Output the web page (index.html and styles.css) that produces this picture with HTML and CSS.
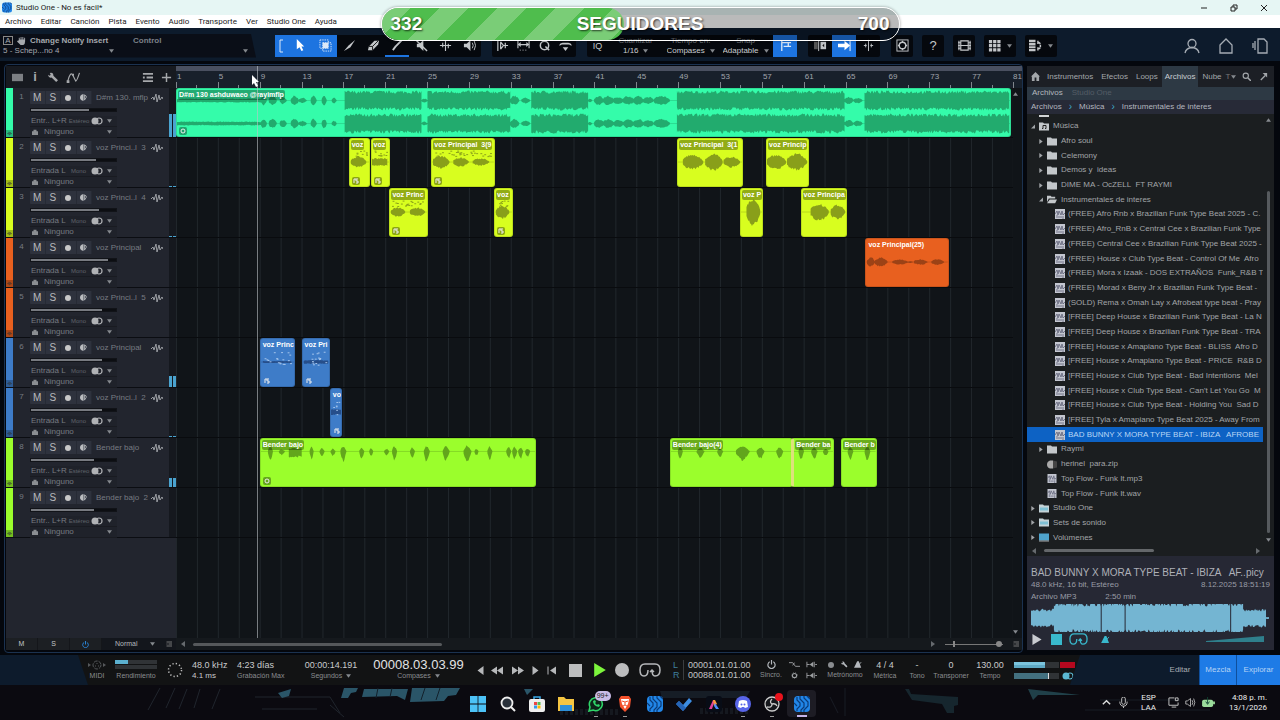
FILE: index.html
```html
<!DOCTYPE html>
<html lang="es">
<head>
    <meta charset="UTF-8">
    <meta name="viewport" content="width=device-width, initial-scale=1.0">
    <title>Studio One - No es facil*</title>
    <link rel="stylesheet" href="styles.css">
</head>
<body>
    <!-- icon sprite -->
    <svg class="sprite" aria-hidden="true">
        <symbol id="logo" viewBox="0 0 16 16"><rect width="16" height="16" rx="4" fill="#2186e8"/><path d="M3 1v3l3 3v3l-3 3v2M6 0v3l4 4v4l-3 3v2M10 0v2l4 4v4l-4 4v2M0 7l3 3M13 0l3 3" fill="none" stroke="#0b3b78" stroke-width="1.2"/></symbol>
        <symbol id="hand" viewBox="0 0 10 10"><path d="M2 5V2h1v2h1V1h1v3h1V1h1v3h1V2h1v4q0 3-2 4H4L0 6l1-1z" fill="currentColor"/></symbol>
        <symbol id="arrow" viewBox="0 0 10 14"><path d="M1 0v11l3-2 2 4 2-1-2-4h3z" fill="#fff"/></symbol>
        <symbol id="select" viewBox="0 0 14 14"><path d="M1 1h9v9H1zM4 4h9v9H4z" fill="none" stroke="currentColor" stroke-dasharray="1.5 1"/><path d="M4 4h6v6H4z" fill="currentColor"/></symbol>
        <symbol id="knife" viewBox="0 0 14 14"><path d="M13 1L6 7 1 13l7-4z" fill="currentColor"/></symbol>
        <symbol id="eraser" viewBox="0 0 14 14"><path d="M8 2h5l-1 4-6 6H1l1-4z" fill="currentColor"/><path d="M2 8h4l6-6M6 8v4" stroke="#111" fill="none"/></symbol>
        <symbol id="brush" viewBox="0 0 14 14"><path d="M13 1L4 10M5 9l-3 4" stroke="currentColor" stroke-width="2"/></symbol>
        <symbol id="mute" viewBox="0 0 14 14"><path d="M2 5h3l4-4v12L5 9H2z" fill="currentColor"/><path d="M1 1l12 12" stroke="currentColor" stroke-width="1.5"/></symbol>
        <symbol id="bend" viewBox="0 0 14 14"><path d="M7 1v12M1 7h12M4 4v5M10 5v5" stroke="currentColor" stroke-width="1.2"/></symbol>
        <symbol id="speaker" viewBox="0 0 14 14"><path d="M1 5h3l4-4v12L4 9H1z" fill="currentColor"/><path d="M10 4q2 3 0 6M12 2q3 5 0 10" fill="none" stroke="currentColor"/></symbol>
        <symbol id="stripin" viewBox="0 0 14 14"><path d="M2 1v12M5 3l3 4-3 4M5 3v8M8 7h5M10 4v6" fill="none" stroke="currentColor" stroke-width="1.3"/></symbol>
        <symbol id="range" viewBox="0 0 14 14"><path d="M1 2v8M13 2v8M2 6h10M4 4L2 6l2 2M10 4l2 2-2 2" fill="none" stroke="currentColor" stroke-width="1.2"/><path d="M3 12h9" stroke="currentColor" stroke-dasharray="1 2"/></symbol>
        <symbol id="quant" viewBox="0 0 14 14"><circle cx="7" cy="7" r="4.5" fill="none" stroke="currentColor" stroke-width="1.6"/><path d="M8 8l4 4" stroke="currentColor" stroke-width="1.6"/></symbol>
        <symbol id="macro" viewBox="0 0 14 14"><path d="M0 7q1-3 4-3h6q3 0 4 3-2 0-3-1H3Q2 7 0 7zM4 9h6l-3 4z" fill="currentColor"/></symbol>
        <symbol id="snap" viewBox="0 0 14 14"><path d="M3 1v12M3 4h10M5 8h8M10 4v4" fill="none" stroke="currentColor" stroke-width="1.4"/></symbol>
        <symbol id="blocks" viewBox="0 0 14 14"><path d="M0 3h4v8H0z" fill="#555"/><path d="M7 3h6v8H7z" fill="currentColor"/><path d="M5 2v11" stroke="currentColor"/><path d="M11 5L9 7l2 2z" fill="#111"/></symbol>
        <symbol id="follow" viewBox="0 0 14 14"><path d="M0 5h7V2l6 5-6 5V9H0z" fill="#fff"/><path d="M13 1v12" stroke="#fff"/></symbol>
        <symbol id="center" viewBox="0 0 14 14"><path d="M7 1v12M4 5v4M10 5v4M2 7h3M9 7h3" stroke="currentColor"/></symbol>
        <symbol id="ring" viewBox="0 0 14 14"><rect x="1" y="1" width="12" height="12" fill="none" stroke="currentColor"/><circle cx="7" cy="7" r="3.5" fill="none" stroke="currentColor" stroke-width="1.5"/><path d="M7 2v2M7 10v2M2 7h2M10 7h2" stroke="currentColor" stroke-width="1.5"/></symbol>
        <symbol id="film" viewBox="0 0 14 14"><path d="M3 2h8v10H3zM3 7h8M1 2v10M13 2v10" fill="none" stroke="currentColor" stroke-width="1.2"/><path d="M0 4h3M0 7h3M0 10h3M11 4h3M11 7h3M11 10h3" stroke="currentColor"/></symbol>
        <symbol id="grid" viewBox="0 0 14 14"><path d="M1 1h3.500v3.500H1zM5.500 1H9v3.500H5.500zM10 1h3.500v3.500H10zM1 5.500h3.500V9H1zM5.500 5.500H9V9H5.500zM10 5.500h3.500V9H10zM1 10h3.500v3.500H1zM5.500 10H9v3.500H5.500zM10 10h3.500v3.500H10z" fill="currentColor"/></symbol>
        <symbol id="rows" viewBox="0 0 16 14"><path d="M0 0h8v3H0zM0 4h8v3H0zM0 8h8v2H0zM0 11h8v3H0z" fill="currentColor"/><path d="M11 1v4M12 3l2 2M14 6v3M11 9v4M12 11l2-1" stroke="currentColor" stroke-width="1.8"/></symbol>
        <symbol id="user" viewBox="0 0 16 16"><circle cx="8" cy="5.500" r="4" fill="none" stroke="currentColor" stroke-width="1.300"/><path d="M1 15q1-5 7-5.500 6 .5 7 5.500" fill="none" stroke="currentColor" stroke-width="1.300"/></symbol>
        <symbol id="house" viewBox="0 0 16 16"><path d="M2 7l6-6 6 6v8H2z" fill="none" stroke="currentColor" stroke-width="1.300"/></symbol>
        <symbol id="pages" viewBox="0 0 16 16"><path d="M6 1h6l3 3v11H6zM3 3v9M1 5v5" fill="none" stroke="currentColor" stroke-width="1.300"/></symbol>
        <symbol id="panel" viewBox="0 0 12 10"><path d="M0 1h12v8H0z" fill="#7c7f83"/></symbol>
        <symbol id="wrench" viewBox="0 0 12 12"><path d="M1 3l2 1 1-1-1-2q4-1 4 3l5 5-2 2-5-5Q2 7 1 3z" fill="currentColor"/></symbol>
        <symbol id="curve" viewBox="0 0 16 12"><path d="M1 11Q4-2 7 4t3 6q1 0 4-9" fill="none" stroke="currentColor" stroke-width="1.300"/><path d="M0 9h3v3H0zM6 2h2v2H6z" fill="currentColor"/></symbol>
        <symbol id="lines" viewBox="0 0 12 12"><path d="M1 2h11M1 6h2M5 6h7M1 10h11" stroke="currentColor" stroke-width="2"/></symbol>
        <symbol id="plus" viewBox="0 0 12 12"><path d="M6 1v10M1 6h10" stroke="currentColor" stroke-width="1.600"/></symbol>
        <symbol id="wave" viewBox="0 0 12 8"><path d="M0 5l2-2 1 3 2-6 1 8 2-7 1 5 2-3 1 2" fill="none" stroke="currentColor"/></symbol>
        <symbol id="half" viewBox="0 0 8 8"><path d="M4 0v8Q0 7 0 4t4-4z" fill="currentColor"/><path d="M5 1q3 1 2 3t-2 3z" fill="none" stroke="currentColor"/></symbol>
        <symbol id="stereo" viewBox="0 0 12 8"><circle cx="4" cy="4" r="3.500" fill="currentColor"/><circle cx="8" cy="4" r="3" fill="none" stroke="currentColor" stroke-width="1.200"/></symbol>
        <symbol id="cube" viewBox="0 0 8 8"><path d="M0 3h8v5H0zM2 1h4v2H2z" fill="currentColor"/></symbol>
        <symbol id="bracket" viewBox="0 0 6 14"><path d="M5 1H2v12h3" fill="none" stroke="currentColor"/></symbol>
        <symbol id="event" viewBox="0 0 8 8"><path d="M2 6V2h4M4 2v2h2M4 6h2V4" fill="none" stroke="#eee"/></symbol>
        <symbol id="timebase" viewBox="0 0 8 8"><circle cx="4" cy="4" r="2" fill="none" stroke="#eee"/></symbol>
        <symbol id="down" viewBox="0 0 6 4"><path d="M0 0h6L3 4z" fill="currentColor"/></symbol>
        <symbol id="right" viewBox="0 0 4 6"><path d="M0 0v6l4-3z" fill="currentColor"/></symbol>
        <symbol id="left" viewBox="0 0 4 6"><path d="M4 0v6L0 3z" fill="currentColor"/></symbol>
        <symbol id="up" viewBox="0 0 6 4"><path d="M0 4h6L3 0z" fill="currentColor"/></symbol>
        <symbol id="open" viewBox="0 0 5 5"><path d="M5 0v5H0z" fill="currentColor"/></symbol>
        <symbol id="power" viewBox="0 0 10 10"><path d="M3 2a4 4 0 1 0 4 0M5 0v5" fill="none" stroke="currentColor" stroke-width="1.300"/></symbol>
        <symbol id="homefill" viewBox="0 0 10 10"><path d="M5 0l5 5H9v5H6V6H4v4H1V5H0z" fill="currentColor"/></symbol>
        <symbol id="search" viewBox="0 0 12 12"><circle cx="5" cy="5" r="3.500" fill="none" stroke="currentColor" stroke-width="1.500"/><path d="M8 8l4 4" stroke="currentColor" stroke-width="2"/></symbol>
        <symbol id="popout" viewBox="0 0 10 10"><path d="M2 9l5-5" stroke="currentColor" stroke-width="1.500"/><path d="M4 1h5v5z" fill="currentColor"/></symbol>
        <symbol id="folder" viewBox="0 0 10 8"><path d="M0 0h4l1 1h5v7H0z" fill="currentColor"/></symbol>
        <symbol id="folderopen" viewBox="0 0 11 8"><path d="M0 0h4l1 1h4v2H2L0 7zM3 4h8L9 8H0z" fill="currentColor"/></symbol>
        <symbol id="music" viewBox="0 0 10 8"><path d="M0 0h4l1 1h5v7H0z" fill="currentColor"/><path d="M4 6V3h3v3M3 6h1M6 6h1" stroke="#222" fill="none"/></symbol>
        <symbol id="set" viewBox="0 0 10 8"><path d="M0 0h4l1 1h5v7H0z" fill="#c5d3d8"/><path d="M1 3h8v3H1z" fill="#7fc0d4"/></symbol>
        <symbol id="disk" viewBox="0 0 10 8"><path d="M0 0h10v7H0z" fill="#4fa3cc"/><path d="M0 7h10v1H0z" fill="#aaa"/></symbol>
        <symbol id="zip" viewBox="0 0 10 8"><path d="M3 0h3v8H3Q0 7 0 4t3-4z" fill="#aaa"/><path d="M6 0l4 1v6L6 8z" fill="#444"/></symbol>
        <symbol id="audio" viewBox="0 0 10 10"><path d="M0 0h10v10H0z" fill="#c3c6d0"/><path d="M0 5l2-3 1 4 1-4 2 4 1-4 1 4 2-2M2 6v3M4 7v2M6 7v2M8 7v3" fill="none" stroke="#5d6076" stroke-width=".8"/></symbol>
        <symbol id="loop" viewBox="0 0 22 14"><path d="M9 7q0 6-4 6T1 7q0-6 5-6h10q5 0 5 6t-5 6q-3 0-3-6M11 9l2-2 2 2" fill="none" stroke="currentColor" stroke-width="1.500"/></symbol>
        <symbol id="metro" viewBox="0 0 10 8"><path d="M4 0h2l3 8H0z" fill="currentColor"/><path d="M9 1L4 7" stroke="currentColor"/></symbol>
        <symbol id="play" viewBox="0 0 10 12"><path d="M0 0v12l10-6z" fill="currentColor"/></symbol>
        <symbol id="rew" viewBox="0 0 13 8"><path d="M6 0v8L0 4zM12 0v8L6 4z" fill="currentColor"/></symbol>
        <symbol id="fwd" viewBox="0 0 13 8"><path d="M1 0v8l6-4zM7 0v8l6-4z" fill="currentColor"/></symbol>
        <symbol id="zero" viewBox="0 0 9 8"><path d="M9 0v8L3 4z" fill="currentColor"/><path d="M1 0v8" stroke="currentColor"/></symbol>
        <symbol id="midi" viewBox="0 0 18 10"><circle cx="9" cy="5" r="4" fill="none" stroke="currentColor" stroke-dasharray="4 1"/><path d="M0 3v4l3-2zM15 3v4l3-2z" fill="currentColor"/><path d="M7 6h1M10 6h1M9 3v1" stroke="currentColor"/></symbol>
        <symbol id="gear" viewBox="0 0 10 10"><circle cx="5" cy="5" r="3" fill="none" stroke="currentColor" stroke-width="1.500"/><circle cx="5" cy="5" r="4.300" fill="none" stroke="currentColor" stroke-dasharray="1 2"/></symbol>
        <symbol id="ramp" viewBox="0 0 12 6"><path d="M0 1h4l3 4h5M6 1l-2 3" fill="none" stroke="currentColor"/></symbol>
        <symbol id="punch" viewBox="0 0 12 6"><path d="M1 0v6M1 3h3M10 3h2" stroke="currentColor"/><path d="M4 3l4-3v6z" fill="currentColor"/><path d="M9 0v6" stroke="currentColor"/></symbol>
    </svg>

    <header class="titlebar">
        <svg class="app-icon"><use href="#logo"/></svg>
        <span>Studio One - No es facil*</span>
        <div class="window-buttons">
            <button aria-label="Minimizar"><svg viewBox="0 0 8 8"><path d="M1 4h6" stroke="#222"/></svg></button>
            <button aria-label="Restaurar"><svg viewBox="0 0 8 8"><path d="M1 3h4v4H1zM3 3V1h4v4H5" fill="none" stroke="#222"/></svg></button>
            <button aria-label="Cerrar"><svg viewBox="0 0 8 8"><path d="M1 1l6 6M7 1L1 7" stroke="#222"/></svg></button>
        </div>
    </header>
    <nav class="menubar">
        <a href="#">Archivo</a><a href="#">Editar</a><a href="#">Canción</a><a href="#">Pista</a><a href="#">Evento</a><a href="#">Audio</a><a href="#">Transporte</a><a href="#">Ver</a><a href="#">Studio One</a><a href="#">Ayuda</a>
    </nav>

    <section class="toolbar">
        <div class="param">
            <div class="param-insert">
                <div class="param-line"><span class="auto">A</span><svg class="s8"><use href="#hand"/></svg><b>Change Notify Insert</b></div>
                <div class="param-line"><span class="param-value">5 - Schep...no 4</span><svg class="caret"><use href="#down"/></svg></div>
            </div>
            <div class="param-control">
                <b>Control</b>
                <svg class="caret"><use href="#down"/></svg>
            </div>
        </div>
        <div class="group tools">
            <div class="tool-on">
                <button class="bracket" aria-label="Grupo"><svg><use href="#bracket"/></svg></button>
                <button class="wide" aria-label="Flecha"><svg><use href="#arrow"/></svg></button>
                <button aria-label="Rango"><svg><use href="#select"/></svg></button>
            </div>
            <button aria-label="Dividir"><svg><use href="#knife"/></svg></button>
            <button aria-label="Borrar"><svg><use href="#eraser"/></svg></button>
            <button class="marked" aria-label="Pintar"><svg><use href="#brush"/></svg></button>
            <button aria-label="Silenciar"><svg><use href="#mute"/></svg></button>
            <button aria-label="Doblar"><svg><use href="#bend"/></svg></button>
            <button aria-label="Escuchar"><svg><use href="#speaker"/></svg></button>
        </div>
        <div class="group narrow">
            <button aria-label="Transitorios"><svg><use href="#stripin"/></svg></button>
            <button aria-label="Longitud"><svg><use href="#range"/></svg></button>
            <button aria-label="Cuantizar evento"><svg><use href="#quant"/></svg></button>
            <button aria-label="Macros"><svg><use href="#macro"/></svg></button>
        </div>
        <div class="group">
            <button class="iq">IQ</button>
            <label class="pick">Cuantizar<span><select><option>1/16</option></select><svg class="caret"><use href="#down"/></svg></span></label>
            <label class="pick">Tiempo en:<span><select><option>Compases</option></select><svg class="caret"><use href="#down"/></svg></span></label>
            <label class="pick">Snap<span><select><option>Adaptable</option></select><svg class="caret"><use href="#down"/></svg></span></label>
            <button class="on" aria-label="Ajustar"><svg><use href="#snap"/></svg></button>
        </div>
        <div class="group">
            <button aria-label="Autodesplazar"><svg><use href="#blocks"/></svg></button>
            <button class="on" aria-label="Seguir"><svg><use href="#follow"/></svg></button>
            <button aria-label="Cursor"><svg><use href="#center"/></svg></button>
        </div>
        <div class="singles">
            <button aria-label="Anillo"><svg><use href="#ring"/></svg></button>
            <button class="help">?</button>
            <button aria-label="Video"><svg><use href="#film"/></svg></button>
            <button class="drop" aria-label="Pads"><svg><use href="#grid"/></svg><svg class="caret"><use href="#down"/></svg></button>
            <button class="drop" aria-label="Vista"><svg><use href="#rows"/></svg><svg class="caret"><use href="#down"/></svg></button>
        </div>
        <div class="account">
            <button aria-label="Cuenta"><svg><use href="#user"/></svg></button>
            <button aria-label="Inicio"><svg><use href="#house"/></svg></button>
            <button aria-label="Documentos"><svg><use href="#pages"/></svg></button>
        </div>
    </section>

    <main class="workspace">
        <section class="arranger">
            <div class="track-side">
                <div class="list-head">
                    <button aria-label="Inspector"><svg><use href="#panel"/></svg></button>
                    <button class="info">i</button>
                    <button aria-label="Opciones"><svg><use href="#wrench"/></svg></button>
                    <button aria-label="Automatización"><svg class="w16"><use href="#curve"/></svg></button>
                    <button class="push" aria-label="Lista de pistas"><svg><use href="#lines"/></svg></button>
                    <button aria-label="Agregar pista"><svg><use href="#plus"/></svg></button>
                </div>
                <div class="tracks" id="tracks"></div>
                <div class="list-foot">
                    <button>M</button><button>S</button><button aria-label="Encendido"><svg><use href="#power"/></svg></button>
                    <select aria-label="Altura de pista"><option>Normal</option></select>
                    <svg class="caret"><use href="#down"/></svg>
                    <svg class="s6"><use href="#lines"/></svg>
                </div>
            </div>
            <div class="timeline">
                <div class="ruler"><div class="ruler-scale" id="ruler"></div><span class="ruler-end">81</span></div>
                <div class="lanes-wrap">
                    <div class="lanes" id="lanes"></div>
                    <div class="vscroll"><svg class="caret"><use href="#up"/></svg><svg class="caret"><use href="#down"/></svg></div>
                </div>
                <div class="hscroll">
                    <svg class="arrow-h"><use href="#left"/></svg>
                    <div class="hscroll-rail"><div class="hscroll-thumb"></div></div>
                    <svg class="arrow-h"><use href="#right"/></svg>
                    <input class="zoom" type="range" value="98" aria-label="Zoom horizontal">
                    <svg class="s6"><use href="#lines"/></svg>
                </div>
                <div class="playhead"></div>
                <svg class="pointer" viewBox="0 0 8 12"><path d="M0 0v10l2-2 2 4 2-1-2-4h3z" fill="#fff"/></svg>
            </div>
        </section>

        <aside class="browser">
            <nav class="tabs">
                <a href="#" class="home" aria-label="Inicio"><svg class="s8"><use href="#homefill"/></svg></a>
                <a href="#">Instrumentos</a><a href="#">Efectos</a><a href="#">Loops</a><a href="#" class="active">Archivos</a><a href="#">Nube</a>
                <span class="tab-more">T<svg class="caret"><use href="#down"/></svg></span>
                <button aria-label="Buscar"><svg class="s8"><use href="#search"/></svg></button>
                <button aria-label="Desacoplar"><svg class="s8"><use href="#popout"/></svg></button>
            </nav>
            <div class="subtabs"><a href="#">Archivos</a><a href="#" class="off">Studio One</a></div>
            <div class="crumbs"><a href="#">Archivos</a><i>›</i><a href="#">Música</a><i>›</i><a href="#">Instrumentales de interes</a></div>
            <div class="tree-wrap">
                <ul class="tree" id="tree"></ul>
                <div class="tree-scroll"><svg class="caret"><use href="#up"/></svg><div class="tree-thumb"></div><svg class="caret"><use href="#down"/></svg></div>
            </div>
            <div class="tree-hscroll"><svg class="arrow-h"><use href="#left"/></svg><div class="tree-rail"><div class="tree-hthumb"></div></div><svg class="arrow-h"><use href="#right"/></svg></div>
            <div class="preview">
                <h2>BAD BUNNY X MORA TYPE BEAT - IBIZA   AF..picy</h2>
                <div class="preview-row"><span>48.0 kHz, 16 bit, Estéreo</span><span>8.12.2025 18:51:19</span></div>
                <div class="preview-row second"><span>Archivo MP3</span><span>2:50 min</span></div>
                <svg class="preview-wave" id="preview" viewBox="0 0 240 28" preserveAspectRatio="none"></svg>
                <div class="preview-controls">
                    <button aria-label="Reproducir"><svg class="p-play"><use href="#play"/></svg></button>
                    <button class="p-stop" aria-label="Detener"></button>
                    <button aria-label="Bucle"><svg class="p-loop"><use href="#loop"/></svg></button>
                    <button aria-label="Metrónomo"><svg class="p-metro"><use href="#metro"/></svg></button>
                    <svg class="p-vol" viewBox="0 0 58 6" preserveAspectRatio="none"><path d="M0 5L58 0v6H0z" fill="#2f7f8c"/></svg>
                </div>
            </div>
        </aside>
    </main>

    <footer class="transport">
        <div class="transport-main">
            <div class="cell"><svg class="midi"><use href="#midi"/></svg><small>MIDI</small></div>
            <div class="cell"><div class="cpu"><div></div><div></div></div><small>Rendimiento</small></div>
            <div class="cell"><svg class="dots" viewBox="0 0 16 16"><circle cx="8" cy="8" r="6.500" fill="none" stroke="#bbb" stroke-width="1.500" stroke-dasharray="1.300 2.100"/></svg></div>
            <div class="cell start"><b>48.0 kHz</b><small class="lit">4.1 ms</small></div>
            <div class="cell start pad"><b>4:23 días</b><small>Grabación Max</small></div>
            <div class="cell"><b>00:00:14.191</b><small>Segundos <svg class="caret"><use href="#down"/></svg></small></div>
            <div class="cell"><b class="position">00008.03.03.99</b><small>Compases <svg class="caret"><use href="#down"/></svg></small></div>
            <div class="controls">
                <button aria-label="Atrás"><svg class="t-s"><use href="#left"/></svg></button>
                <button aria-label="Rebobinar"><svg class="t-w"><use href="#rew"/></svg></button>
                <button aria-label="Avanzar"><svg class="t-w"><use href="#fwd"/></svg></button>
                <button aria-label="Adelante"><svg class="t-s"><use href="#right"/></svg></button>
                <button aria-label="Ir a cero"><svg class="t-z"><use href="#zero"/></svg></button>
                <button aria-label="Detener"><span class="stop"></span></button>
                <button aria-label="Reproducir"><svg class="t-play"><use href="#play"/></svg></button>
                <button aria-label="Grabar"><span class="rec"></span></button>
                <button aria-label="Bucle"><svg class="t-loop"><use href="#loop"/></svg></button>
            </div>
            <div class="locators"><div class="lr"><span>L</span><span>R</span></div><div class="lr-times"><span>00001.01.01.00</span><span>00088.01.01.00</span></div></div>
            <div class="cell"><svg class="s8"><use href="#power"/></svg><small>Sincro.</small></div>
            <div class="quad"><svg><use href="#ramp"/></svg><svg><use href="#punch"/></svg><svg><use href="#gear"/></svg><svg><use href="#punch"/></svg></div>
            <div class="cell"><div class="trio"><span class="dot"></span><svg><use href="#wrench"/></svg><svg><use href="#metro"/></svg></div><small>Metrónomo</small></div>
            <div class="cell"><b>4 / 4</b><small>Métrica</small></div>
            <div class="cell"><b>-</b><small>Tono</small></div>
            <div class="cell"><b>0</b><small>Transponer</small></div>
            <div class="cell"><b>130.00</b><small>Tempo</small></div>
            <div class="outs">
                <div class="out-row"><div class="out"><div class="out-a"></div></div><div class="clip-led"></div></div>
                <div class="out-row"><div class="out"><div class="out-b"></div></div><svg><use href="#stereo"/></svg></div>
            </div>
        </div>
        <div class="views"><button>Editar</button><button class="on">Mezcla</button><button class="on">Explorar</button></div>
    </footer>

    <div class="taskbar">
        <svg class="wallpaper" viewBox="0 0 1280 35" preserveAspectRatio="none">
            <path d="M160 3l-12 22M175 3l-9 20M187 4l-8 20M200 4l-6 19M220 4l-8 20M255 12h75l10 16M262 24h55M330 20l14 12" stroke="#20252d" fill="none"/>
            <path d="M278 8l13-4-2 7-7 2zM344 3h14l-2 4-5 1-3 5h-7zM364 4h44l-3 11-8-4-35 1zM412 3h48l-4 7-8 1-4 5-34 1zM524 4h9l-6 6z" fill="#2a5568"/>
            <path d="M378 3l-2 10M392 3l-2 9M425 3l-4 12M440 3l-4 12" stroke="#12202b"/>
            <path d="M660 6h90l-4 7h-84z" fill="#161d26"/>
            <path d="M560 27h60M700 26h50" stroke="#15181f" stroke-width="6" stroke-dasharray="3 2"/>
            <path d="M905 4h4l2 5 47 3v8l-4 1v7h-7l-5-9-30-4z" fill="#16262e"/>
            <path d="M1028 4l52 6h-42l-5 5z" fill="#204049"/>
            <path d="M1085 25h125M1100 15h80M845 3v28M830 12l8 16" stroke="#191c25"/>
        </svg>
        <div class="task-apps">
            <button aria-label="Inicio"><svg viewBox="0 0 16 16"><path d="M0 0h7.600v7.600H0zM8.400 0H16v7.600H8.400zM0 8.400h7.600V16H0zM8.400 8.400H16V16H8.400z" fill="#4cc2f7"/></svg></button>
            <button aria-label="Buscar"><svg viewBox="0 0 16 16"><circle cx="7" cy="7" r="5.500" fill="#29303a" stroke="#eee" stroke-width="1.800"/><path d="M11 11l4 4" stroke="#eee" stroke-width="2"/></svg></button>
            <button aria-label="Store"><svg viewBox="0 0 16 16"><path d="M5 4V1h6v3" fill="none" stroke="#3aa9e8" stroke-width="1.500"/><rect y="3" width="16" height="13" rx="2" fill="#eee"/><path d="M5 6h3v3H5z" fill="#e44"/><path d="M8.500 6h3v3h-3z" fill="#5b5"/><path d="M5 9.500h3v3H5z" fill="#39e"/><path d="M8.500 9.500h3v3h-3z" fill="#fb0"/></svg></button>
            <button aria-label="Explorador"><svg viewBox="0 0 16 16"><path d="M0 1h6l2 2h8v12H0z" fill="#f5c542"/><path d="M2 9h12v6H2z" fill="#2d8fd8"/></svg></button>
            <button class="run" aria-label="WhatsApp"><svg viewBox="0 0 16 16"><path d="M1 15l1-4a6.500 6.500 0 1 1 3 3z" fill="#0d2418" stroke="#2fd468" stroke-width="1.600"/><path d="M5 5q0 5 6 6l1-2-2-1-1 1-2-2 1-1-1-2z" fill="#2fd468"/></svg><span class="badge">99+</span></button>
            <button class="run" aria-label="Brave"><svg viewBox="0 0 16 16"><path d="M4 0h8l2 3-1 8-5 5-5-5-1-8z" fill="#f4512c"/><path d="M4 3h8l-1 5-3 5-3-5z" fill="#fff"/><path d="M5 5l3 1 3-1M8 6v3M6 10l2-1 2 1" fill="none" stroke="#f4512c"/></svg></button>
            <button aria-label="Studio One"><svg><use href="#logo"/></svg></button>
            <button aria-label="Tareas"><svg viewBox="0 0 16 16"><path d="M0 8l3-3 4 4 6-7 3 3-9 10z" fill="#3d8de2"/><path d="M0 8l3-3 7 7-3 3z" fill="#2564b8"/></svg></button>
            <button aria-label="Ableton"><svg viewBox="0 0 16 16"><rect width="16" height="16" rx="3" fill="#080c16"/><path d="M3 13L7 4h2l-3 9z" fill="#e2419a"/><path d="M7 4h2l2 4-3 2z" fill="#ff9a3a"/><path d="M9 7l4 6h-3L8 10z" fill="#4c8dff"/></svg></button>
            <button class="run" aria-label="Discord"><svg viewBox="0 0 16 16"><circle cx="8" cy="8" r="8" fill="#5865e8"/><path d="M4 5q4-2 8 0l1 6-3 1-1-1H7l-1 1-3-1z" fill="#fff"/><circle cx="6.500" cy="8.500" r="1" fill="#5865e8"/><circle cx="9.500" cy="8.500" r="1" fill="#5865e8"/></svg></button>
            <button class="run" aria-label="OBS"><svg viewBox="0 0 16 16"><circle cx="8" cy="8" r="7" fill="#15171c" stroke="#ccc" stroke-width="1.300"/><path d="M8 3q-3 3 0 5 4-1 5 2M8 8q0 4-5 3" fill="none" stroke="#ccc" stroke-width="1.300"/></svg><span class="alert"></span></button>
            <button class="current" aria-label="Studio One abierto"><svg><use href="#logo"/></svg></button>
        </div>
        <div class="tray">
            <svg viewBox="0 0 12 12"><path d="M2 8l4-4 4 4" fill="none" stroke="#ddd" stroke-width="1.500"/></svg>
            <svg viewBox="0 0 12 12"><rect x="4" width="4" height="8" rx="2" fill="none" stroke="#ccc"/><path d="M2 5q0 5 4 5t4-5M6 10v2" fill="none" stroke="#ccc"/></svg>
            <span class="lang">ESP<br>LAA</span>
            <svg viewBox="0 0 12 12"><path d="M7 1H1v8h10V6M4 11h5M8 1h3v3H8z" fill="none" stroke="#ccc"/></svg>
            <svg viewBox="0 0 14 14"><path d="M1 5h2l4-3v10L3 9H1z" fill="none" stroke="#ccc"/><path d="M9 4q2 3 0 6M11 2q3 5 0 10" fill="none" stroke="#ccc"/></svg>
            <svg class="battery" viewBox="0 0 14 12"><rect y="3" width="12" height="8" rx="2" fill="#9bdc9b"/><path d="M12 5h2v3h-2z" fill="#9bdc9b"/><path d="M6 0v7M4 5l2 3 2-3" fill="none" stroke="#143"/></svg>
            <span class="clock">4:08 p. m.<br>13/1/2026</span>
        </div>
    </div>

    <div class="goal">
        <div class="goal-fill"></div>
        <span>332</span><span>SEGUIDORES</span><span>700</span>
    </div>

    <script src="script.js"></script>
</body>
</html>
```
FILE: styles.css
```css
* {
    box-sizing: border-box;
}

body {
    margin: 0;
    height: 100vh;
    display: flex;
    flex-direction: column;
    background: #04070d;
    color: #b4b8bd;
    font-family: "Liberation Sans", Arial, sans-serif;
    font-size: 8px;
    line-height: 10px;
    overflow: hidden;
    position: relative;
}

button,
select {
    font: inherit;
    color: inherit;
    background: none;
    border: 0;
    padding: 0;
    margin: 0;
}

select {
    appearance: none;
}

button {
    display: flex;
    align-items: center;
    justify-content: center;
}

a {
    color: inherit;
    text-decoration: none;
}

svg {
    display: block;
    flex: none;
}

.sprite {
    position: absolute;
    width: 0;
    height: 0;
}

.caret {
    width: 5px;
    height: 4px;
    color: #85898e;
}

.s8 {
    width: 9px;
    height: 9px;
}

.s6 {
    width: 6px;
    height: 6px;
}

.arrow-h {
    width: 4px;
    height: 6px;
    color: #666a6e;
}

/* window title and menu */
.titlebar {
    display: flex;
    align-items: center;
    height: 15px;
    padding-left: 2px;
    gap: 4px;
    background: #e6f6f4;
    color: #222;
    font-family: Roboto, sans-serif;
}

.app-icon {
    width: 10px;
    height: 11px;
}

.window-buttons {
    display: flex;
    margin-left: auto;
    padding-right: 12px;
    gap: 22px;
}

.window-buttons svg {
    width: 8px;
    height: 8px;
}

.menubar {
    display: flex;
    align-items: center;
    height: 13px;
    gap: 9px;
    padding-left: 5px;
    background: #fff;
    color: #222;
    font-family: Roboto, sans-serif;
}

/* toolbar */
.toolbar {
    display: flex;
    align-items: center;
    height: 33px;
    padding-top: 2px;
    background: #0d1b2c;
}

.toolbar svg {
    width: 13px;
    height: 13px;
}

.toolbar .caret {
    width: 5px;
    height: 4px;
}

.param {
    display: flex;
    width: 256px;
    height: 24px;
    margin-right: 19px;
    background: #0a0e17;
    clip-path: polygon(0 0, 98% 0, 100% 100%, 0 100%);
    color: #a5a9ae;
}

.param-insert {
    width: 120px;
    padding: 2px 6px 0 3px;
}

.param-line {
    display: flex;
    align-items: center;
    gap: 4px;
    white-space: nowrap;
}

.param-line .s8 {
    width: 9px;
    height: 9px;
}

.param-value {
    flex: 1;
}

.auto {
    width: 10px;
    height: 9px;
    border: 1px solid #888;
    line-height: 8px;
    text-align: center;
}

.param-control {
    flex: 1;
    display: flex;
    justify-content: space-between;
    padding: 2px 8px 5px 13px;
    color: #7c8188;
}

.param-control .caret {
    align-self: flex-end;
}

.group {
    display: flex;
    height: 22px;
    margin-right: 11px;
    border-radius: 2px;
    background: #05080d;
    color: #c3c6c9;
}

.group button {
    width: 24px;
}

.group.narrow button {
    width: 21px;
}

.tool-on {
    display: flex;
    background: #1d74e0;
    color: #dbe8f8;
}

.group .bracket {
    width: 12px;
}

.bracket svg {
    width: 6px;
    height: 14px;
}

.group .wide {
    width: 26px;
}

.marked {
    border-bottom: 2px solid #1d74e0;
}

.group .on {
    background: #1d74e0;
    color: #dbe8f8;
}

.group .iq {
    width: 21px;
    font-size: 9px;
}

.pick {
    display: flex;
    flex-direction: column;
    align-items: center;
    width: 55px;
    padding-top: 1px;
    color: #6e7378;
}

.pick span {
    display: flex;
    align-items: center;
    gap: 4px;
}

.pick select {
    color: #c9ccd0;
}

.singles {
    display: flex;
    gap: 9px;
    color: #c3c6c9;
}

.singles button {
    width: 22px;
    height: 22px;
    border-radius: 2px;
    background: #05080d;
}

.singles .help {
    font-size: 13px;
}

.singles .drop {
    width: 32px;
    gap: 6px;
}

.account {
    display: flex;
    gap: 18px;
    margin-left: auto;
    padding-right: 12px;
    color: #a5acb4;
}

.account svg {
    width: 16px;
    height: 16px;
}

/* workspace */
.workspace {
    flex: 1;
    display: flex;
    gap: 4px;
    min-height: 0;
    padding: 3px 6px 2px 4px;
}

.arranger {
    flex: 1;
    display: flex;
    min-width: 0;
    padding: 1px 0 2px 1px;
    border: 1px solid #1b3250;
    border-radius: 4px;
}

.track-side {
    display: flex;
    flex-direction: column;
    width: 170px;
    background: #22252e;
}

.list-head {
    display: flex;
    align-items: center;
    height: 22px;
    gap: 8px;
    padding: 0 4px 0 6px;
    background: #171a20;
    color: #a6a8ab;
}

.list-head svg {
    width: 11px;
    height: 11px;
}

.list-head .w16 {
    width: 16px;
}

.info {
    width: 8px;
    font-size: 13px;
    font-weight: bold;
}

.push {
    margin-left: auto;
}

.tracks {
    flex: 1;
    min-height: 0;
}

.track {
    display: flex;
    height: 50px;
    border-bottom: 1px solid #0b0d12;
    color: #777b82;
}

.track-color {
    display: flex;
    align-items: flex-end;
    width: 7px;
}

.track-color svg {
    width: 7px;
    height: 7px;
    padding: 1px;
    background: rgba(0, 0, 0, 0.25);
    color: #333;
}

.track-number {
    width: 17px;
    padding-top: 4px;
    text-align: center;
}

.track-body {
    flex: 1;
    min-width: 0;
    padding-top: 3px;
}

.track-top {
    display: flex;
    align-items: center;
    padding-right: 6px;
}

.track-buttons {
    display: flex;
    width: 62px;
    height: 13px;
    margin-right: 4px;
    border-radius: 1px;
    background: #2e323d;
    color: #b9bbbe;
}

.track-buttons button {
    flex: 1;
    border-right: 1px solid #262a34;
    font-size: 10px;
}

.track-buttons svg {
    width: 7px;
    height: 7px;
}

.rec-dot {
    width: 6px;
    height: 6px;
    border-radius: 50%;
    background: #c8c8c8;
}

.track-name {
    flex: 1;
    min-width: 0;
    white-space: pre;
}

.track-top > svg {
    width: 12px;
    height: 8px;
    color: #9a9da2;
}

.fader {
    display: block;
    appearance: none;
    width: 87px;
    height: 4px;
    margin: 4px 0 4px;
    border: 1px solid #111318;
    background: linear-gradient(90deg, #777a80 var(--level), #0c0e12 var(--level));
}

.fader::-webkit-slider-thumb {
    appearance: none;
    width: 1px;
    height: 2px;
}

.slot {
    display: flex;
    align-items: center;
    width: 87px;
    height: 11px;
    padding: 0 5px 0 1px;
    border-bottom: 1px solid #191b21;
    background: #1f222a;
}

.slot small {
    flex: 1;
    min-width: 0;
    color: #5f636a;
    font-size: 6px;
    text-align: center;
}

.slot .io {
    width: 12px;
    height: 8px;
    margin-right: 4px;
    color: #b0b2b5;
}

.slot .box {
    width: 6px;
    height: 6px;
    margin: 0 6px 0 1px;
    color: #8b8e92;
}

.slot .grow {
    flex: 1;
}

.meters {
    display: flex;
    align-items: flex-end;
    gap: 1px;
    width: 7px;
    background: #15181e;
}

.meters div {
    flex: 1;
    background: #4aa3cf;
}

.list-foot {
    display: flex;
    align-items: center;
    height: 12px;
    background: #13161c;
    font-size: 7px;
}

.list-foot button {
    width: 32px;
    height: 12px;
    background: #1c1f23;
    border-right: 1px solid #14161a;
    color: #c3c5c8;
}

.list-foot button svg {
    width: 7px;
    height: 7px;
    color: #2b8ce6;
}

.list-foot select {
    margin-left: 13px;
    margin-right: 12px;
}

.list-foot .s6 {
    margin-left: auto;
    margin-right: 4px;
    color: #777;
}

/* timeline */
.timeline {
    flex: 1;
    display: flex;
    flex-direction: column;
    min-width: 0;
    position: relative;
    background: #101418;
}

.ruler {
    display: flex;
    height: 22px;
    border-top: 5px solid #4a5060;
    background: #18202b;
    color: #a0a5ab;
}

.ruler-scale {
    flex: 1;
    display: grid;
    grid-template-columns: repeat(20, 1fr);
}

.ruler-scale span,
.ruler-end {
    padding-top: 1px;
    background:
        linear-gradient(#80868d, #80868d) 0 100% / 1px 6px no-repeat,
        linear-gradient(#80868d, #80868d) 50% 100% / 1px 3px no-repeat;
}

.ruler-scale span {
    padding-left: 1px;
}

.ruler-end {
    width: 9px;
    background-size: 1px 6px, 0 0;
}

.lanes-wrap {
    flex: 1;
    display: flex;
    min-height: 0;
}

.lanes {
    flex: 1;
    background: linear-gradient(90deg, #20262b 1px, transparent 1px) 0 0 / 2.5% 100%;
}

.lane {
    position: relative;
    height: 50px;
    border-bottom: 1px solid #090b0e;
}

.vscroll {
    display: flex;
    flex-direction: column;
    justify-content: space-between;
    width: 9px;
    padding: 4px 0;
}

.clip {
    position: absolute;
    top: 0;
    bottom: 0;
    overflow: hidden;
    border: 1px solid rgba(0, 0, 0, 0.12);
    border-radius: 3px;
    color: #fff;
}

.clip.joined {
    border-left: 3px solid #dde07c;
}

.clip > svg {
    position: absolute;
    inset: 0;
    width: 100%;
    height: 100%;
}

.clip-name {
    position: absolute;
    top: 1px;
    left: 1px;
    padding: 0 1px;
    border-radius: 2px;
    background: rgba(0, 0, 0, 0.32);
    white-space: pre;
    font-size: 7px;
    font-weight: bold;
}

.clip .clip-fx {
    position: absolute;
    inset: auto auto 1px 2px;
    width: 8px;
    height: 8px;
    border-radius: 2px;
    background: rgba(0, 0, 0, 0.35);
}

.mint {
    background-color: #34fcaa;
}

.yellow {
    background-color: #d8fe1f;
}

.orange {
    background-color: #e8601f;
}

.blue-c {
    background-color: #3e7cc8;
}

.lime {
    background-color: #9bfe2c;
}

.clip.blue-c .clip-name,
.clip.orange .clip-name,
.clip.blue-c .clip-fx {
    background: none;
}

.hscroll {
    display: flex;
    align-items: center;
    height: 12px;
    padding: 0 3px 0 5px;
    background: #15191d;
}

.hscroll-rail {
    flex: 1;
    padding: 0 6px 0 8px;
}

.hscroll-thumb {
    width: 34%;
    height: 3px;
    border-radius: 2px;
    background: #55585b;
}

.zoom {
    appearance: none;
    width: 58px;
    height: 10px;
    margin: 0 10px;
    background:
        linear-gradient(#888, #888) 8px 50% / 2px 6px no-repeat,
        linear-gradient(#777, #777) 0 50% / 100% 1px no-repeat;
}

.zoom::-webkit-slider-thumb {
    appearance: none;
    width: 6px;
    height: 6px;
    border-radius: 50%;
    background: #888;
}

.hscroll .s6 {
    color: #777;
}

.playhead {
    position: absolute;
    top: 0;
    bottom: 12px;
    left: 9.6%;
    width: 1px;
    background: rgba(190, 195, 200, 0.6);
}

.pointer {
    position: absolute;
    top: 9px;
    left: 9%;
    width: 8px;
    height: 12px;
}

/* browser */
.browser {
    display: flex;
    flex-direction: column;
    width: 247px;
    padding: 2px 0 3px;
}

.tabs {
    display: flex;
    align-items: center;
    height: 21px;
    padding: 0 6px 0 4px;
    background: #1c1f25;
    color: #a3a7ab;
}

.tabs a {
    padding: 6px 4px 5px;
    white-space: nowrap;
}

.tabs .home {
    padding: 0 3px 0 0;
}

.tabs .active {
    padding: 6px 3px 5px;
    background: #2d3944;
    color: #c8ccd0;
}

.tab-more {
    display: flex;
    align-items: center;
    gap: 1px;
    padding-right: 6px;
    color: #777;
}

.tabs button:last-child {
    margin-left: auto;
}

.subtabs {
    display: flex;
    gap: 9px;
    height: 13px;
    padding: 1px 5px;
    background: #2d3944;
    color: #b3b8bd;
}

.off {
    color: #545d66;
}

.crumbs {
    display: flex;
    align-items: center;
    gap: 7px;
    height: 14px;
    padding: 0 4px;
    background: #272a37;
    color: #b3b6bf;
}

.crumbs i {
    color: #3fa8c8;
    font-style: normal;
    font-size: 10px;
}

.tree-wrap {
    flex: 1;
    display: flex;
    min-height: 0;
    background: #1b1e20;
}

.tree {
    flex: 1;
    display: flex;
    flex-direction: column;
    min-width: 0;
    margin: 0;
    padding: 5px 0 0;
    list-style: none;
    color: #a2a5a8;
    background: linear-gradient(#d0d3d5, #d0d3d5) 12px 1px / 10px 2px no-repeat;
}

.tree li {
    flex: 1;
    display: flex;
    align-items: center;
    min-height: 0;
    overflow: hidden;
    white-space: pre;
}

.tree .twist {
    width: 4px;
    height: 5px;
    margin-right: 4px;
}

.tree .icon {
    width: 10px;
    height: 9px;
    margin-right: 4px;
    color: #c3c7ca;
}

.depth0 {
    padding-left: 4px;
}

.depth1 {
    padding-left: 12px;
}

.leaf1 {
    padding-left: 20px;
}

.leaf2 {
    padding-left: 28px;
}

.tree .leaf2 .icon {
    height: 10px;
    margin-right: 3px;
}

.tree .selected {
    background: #0d62c4;
    color: #b8d6f5;
}

.tree-scroll {
    display: flex;
    flex-direction: column;
    align-items: center;
    width: 11px;
    padding: 4px 0 3px;
}

.tree-thumb {
    flex: 1;
    width: 3px;
    margin-top: 69px;
    margin-bottom: 5px;
    border-radius: 2px;
    background: #565a5e;
}

.tree-hscroll {
    display: flex;
    align-items: center;
    height: 11px;
    padding: 0 14px 0 5px;
    background: #1b1e20;
}

.tree-rail {
    flex: 1;
    padding-left: 8px;
}

.tree-hthumb {
    width: 52%;
    height: 3px;
    border-radius: 2px;
    background: #64676a;
}

.preview {
    padding: 11px 4px 4px;
    background: #262834;
    color: #999ca5;
}

.preview h2 {
    margin: 0;
    color: #aeb1b8;
    font-size: 10px;
    font-weight: normal;
    line-height: 12px;
    white-space: pre;
}

.preview-row {
    display: flex;
    justify-content: space-between;
    height: 12px;
    line-height: 12px;
}

.preview-row.second {
    justify-content: flex-start;
    gap: 29px;
}

.preview-wave {
    width: 100%;
    height: 28px;
    margin-top: 1px;
}

.preview-controls {
    display: flex;
    align-items: center;
    height: 14px;
    gap: 9px;
    padding: 0 6px 0 1px;
}

.p-play {
    width: 10px;
    height: 11px;
    color: #c9cbd0;
}

.p-stop {
    width: 11px;
    height: 11px;
    background: #39b8cc;
}

.p-loop {
    width: 19px;
    height: 12px;
    margin-left: -2px;
    color: #39b8cc;
}

.p-metro {
    width: 9px;
    height: 7px;
    margin-left: 4px;
    color: #39b8cc;
}

.p-vol {
    width: 58px;
    height: 6px;
    margin-left: auto;
}

/* transport */
.transport {
    display: flex;
    height: 30px;
    background: #0d1b2c;
}

.transport-main {
    display: grid;
    grid-template-columns: 34px 44px 34px 40px 65px 68px 107px 194px 92px 26px 38px 46px 34px 30px 38px 40px 70px;
    margin-left: 78px;
    padding-left: 2px;
    background: #121314;
    clip-path: polygon(0 0, 100% 0, 99% 100%, 1% 100%);
}

.cell {
    display: flex;
    flex-direction: column;
    align-items: center;
    justify-content: center;
    gap: 1px;
    white-space: nowrap;
}

.cell > :first-child {
    min-height: 9px;
}

.cell.start {
    align-items: flex-start;
}

.cell.pad {
    padding-left: 5px;
}

.cell b {
    color: #c9cbcd;
    font-size: 9px;
    font-weight: normal;
}

.cell small {
    display: flex;
    align-items: center;
    gap: 4px;
    color: #8a8d90;
    font-size: 7px;
}

.cell small.lit {
    color: #c9cbcd;
    font-size: 8px;
}

.cell .position {
    color: #e2e3e4;
    font-size: 13px;
}

.midi {
    width: 18px;
    height: 10px;
    color: #55585b;
}

.cpu {
    width: 42px;
}

.cpu div {
    height: 4px;
    margin-bottom: 1px;
    background: #303336;
}

.cpu div:first-child {
    background: linear-gradient(90deg, #5bb0cf 30%, #303336 30%);
}

.dots {
    width: 16px;
    height: 16px;
}

.controls {
    display: grid;
    grid-template-columns: 16px 18px 22px 14px 18px 30px 20px 24px 32px;
    align-items: center;
    color: #b6b8ba;
}

.t-s {
    width: 7px;
    height: 9px;
}

.t-w {
    width: 13px;
    height: 9px;
}

.t-z {
    width: 9px;
    height: 9px;
}

.stop {
    width: 13px;
    height: 13px;
    background: #bcbdbe;
}

.t-play {
    width: 12px;
    height: 14px;
    color: #7df53c;
}

.rec {
    width: 14px;
    height: 14px;
    border-radius: 50%;
    background: #bcbdbe;
}

.t-loop {
    width: 22px;
    height: 14px;
}

.locators {
    display: flex;
    align-items: center;
    gap: 4px;
    padding-left: 6px;
    color: #c3c5c7;
}

.lr,
.lr-times {
    display: flex;
    flex-direction: column;
    font-size: 9px;
}

.lr {
    width: 12px;
    padding-left: 1px;
    border-right: 1px solid #3a3d40;
    color: #3f7f9c;
}

.quad {
    display: grid;
    grid-template-columns: 12px 12px;
    gap: 4px 5px;
    place-content: center;
    place-items: center;
    color: #9b9ea1;
}

.quad svg {
    width: 11px;
    height: 7px;
}

.trio {
    display: flex;
    align-items: center;
    gap: 6px;
}

.trio svg {
    width: 8px;
    height: 7px;
}

.dot {
    width: 6px;
    height: 6px;
    border-radius: 50%;
    background: #8a8d90;
}

.outs {
    display: flex;
    flex-direction: column;
    justify-content: center;
    gap: 5px;
    padding: 0 5px 0 4px;
}

.out-row {
    display: flex;
    align-items: center;
    gap: 1px;
    height: 6px;
}

.out {
    width: 45px;
    height: 6px;
    background: #303336;
}

.out-a {
    width: 68%;
    height: 6px;
    border-bottom: 3px solid #5ea9c4;
    background: #7bc4dd;
}

.out-b {
    width: 78%;
    height: 6px;
    border-right: 1px solid #ddd;
    background: #43707f;
}

.out-row svg {
    width: 12px;
    height: 8px;
    margin-left: 2px;
    color: #5bb8d2;
}

.clip-led {
    width: 15px;
    height: 6px;
    background: #b5081f;
}

.views {
    display: flex;
    margin-left: auto;
    color: #a9adb2;
}

.views button {
    width: 38px;
    white-space: nowrap;
}

.views .on {
    width: 44px;
    background: #1e7be6;
    color: #b6d3f5;
    border-left: 1px solid #0f4f9c;
}

.views .on:nth-child(2) {
    width: 37px;
}

/* taskbar */
.taskbar {
    display: grid;
    grid-template-columns: 1fr 353px 1fr;
    align-items: center;
    height: 35px;
    position: relative;
    background: #0b0a10;
}

.wallpaper {
    position: absolute;
    inset: 0;
    width: 100%;
    height: 100%;
}

.task-apps {
    grid-column: 2;
    display: grid;
    grid-template-columns: repeat(12, 1fr);
    padding-top: 2px;
    position: relative;
}

.task-apps button {
    position: relative;
    height: 27px;
}

.task-apps svg {
    width: 16px;
    height: 16px;
}

.task-apps .run {
    background: linear-gradient(#999, #999) 50% 100% / 4px 1px no-repeat;
}

.task-apps .current {
    border-radius: 4px;
    background: linear-gradient(#c5b5ea, #c5b5ea) 50% 100% / 10px 2px no-repeat, #1d1c24;
}

.badge {
    position: absolute;
    top: 1px;
    right: 0;
    padding: 0 2px;
    border-radius: 5px;
    background: #c9bce8;
    color: #222;
    font-size: 7px;
}

.alert {
    position: absolute;
    top: 3px;
    right: 4px;
    width: 8px;
    height: 8px;
    border-radius: 50%;
    background: #e8121c;
}

.tray {
    display: flex;
    align-items: center;
    justify-content: flex-end;
    gap: 6px;
    padding-right: 13px;
    position: relative;
    color: #eee;
    font-family: Roboto, sans-serif;
    text-align: right;
}

.tray svg {
    width: 11px;
    height: 11px;
}

.tray .battery {
    width: 13px;
}

.lang {
    padding: 0 6px;
    text-align: center;
}

.clock {
    padding-left: 8px;
}

/* follower goal overlay */
.goal {
    position: absolute;
    top: 7px;
    left: 0;
    right: 0;
    display: flex;
    align-items: center;
    justify-content: space-between;
    width: 519px;
    height: 34px;
    margin: 0 auto;
    padding: 0 9px;
    border: 1px solid #fff;
    border-radius: 17px;
    background: rgba(0, 0, 0, 0.27);
    box-shadow: 0 0 3px rgba(0, 0, 0, 0.4);
    color: #fff;
    font-size: 19px;
    font-weight: bold;
    text-shadow: 1px 1px 2px rgba(0, 0, 0, 0.7);
}

.goal span {
    position: relative;
}

.goal-fill {
    position: absolute;
    top: 0;
    bottom: 0;
    left: 0;
    width: 47%;
    border-radius: 17px;
    background: repeating-linear-gradient(135deg, #7acd77 0 20px, #4fbd4d 20px 41px);
}
```
FILE: script.js
```js
const BARS = 80;
const PX = 10.46;

const tracks = [
    { color: 'mint', name: 'D#m 130. mflp', input: 'Entr.. L+R', mode: 'Estéreo', level: 68, meter: 23 },
    { color: 'yellow', name: 'voz Princi..l  3', input: 'Entrada L', mode: 'Mono', level: 77, meter: 1 },
    { color: 'yellow', name: 'voz Princi..l  4', input: 'Entrada L', mode: 'Mono', level: 80, meter: 1 },
    { color: 'orange', name: 'voz Principal', input: 'Entrada L', mode: 'Mono', level: 91, meter: 0 },
    { color: 'orange', name: 'voz Princi..l  5', input: 'Entrada L', mode: 'Mono', level: 83, meter: 0 },
    { color: 'blue-c', name: 'voz Principal', input: 'Entrada L', mode: 'Mono', level: 83, meter: 11 },
    { color: 'blue-c', name: 'voz Princi..l  2', input: 'Entrada L', mode: 'Mono', level: 83, meter: 1 },
    { color: 'lime', name: 'Bender bajo', input: 'Entr.. L+R', mode: 'Estéreo', level: 74, meter: 9 },
    { color: 'lime', name: 'Bender bajo  2', input: 'Entr.. L+R', mode: 'Estéreo', level: 74, meter: 0 }
];

// wave parts: [from, to, amplitude, flat]
const mainWave = [
    [0, 84, 2, 1], [84, 90, 5], [92, 100, 5], [103, 110, 4], [114, 122, 5], [122, 130, 3], [134, 140, 5], [145, 150, 5], [155, 160, 3],
    [168, 245, 10, 1], [245, 251, 2], [251, 334, 10, 1], [334, 343, 5], [345, 354, 3], [355, 412, 10, 1], [412, 416, 2],
    [418, 428, 5], [427, 438, 5], [437, 448, 4], [447, 458, 5], [457, 468, 5], [467, 478, 4], [478, 494, 5],
    [501, 669, 10, 1], [669, 678, 4], [678, 687, 3], [689, 834, 10, 1]
];

const bassWave = [
    [7, 12, 11], [18, 24, 4], [28, 41, 6, 1], [49, 53, 9], [59, 64, 6], [70, 75, 5], [80, 86, 11], [99, 104, 8], [109, 113, 6],
    [124, 129, 5], [132, 137, 10], [150, 155, 7], [164, 170, 11], [183, 190, 10], [204, 212, 11], [215, 219, 5],
    [228, 233, 10], [247, 252, 8], [253, 258, 9], [259, 264, 8], [266, 271, 6]
];

const clips = [
    { track: 0, from: 0, to: 79.8, name: 'D#m 130 ashduwaeo @rayimflp', fx: 'timebase', wave: mainWave, mids: [12, 36] },
    { track: 1, from: 16.5, to: 18.5, name: 'voz', fx: 'event', wave: [[1, 18, 6]], mids: [24], specks: 1 },
    { track: 1, from: 18.6, to: 20.5, name: 'voz', fx: 'event', wave: [[0, 17, 4, 1]], mids: [24], specks: 1 },
    { track: 2, from: 20.4, to: 24.1, name: 'voz Princ', fx: 'event', wave: [[1, 16, 5], [21, 37, 5]], mids: [24], specks: 1 },
    { track: 1, from: 24.4, to: 30.5, name: 'voz Principal  3(9', fx: 'event', wave: [[1, 18, 7], [22, 38, 5], [42, 59, 4]], mids: [24], specks: 1 },
    { track: 2, from: 30.4, to: 32.2, name: 'voz', fx: 'event', wave: [[1, 16, 7]], mids: [24], specks: 1 },
    { track: 1, from: 47.9, to: 54.2, name: 'voz Principal  3(1', wave: [[5, 26, 8], [28, 46, 9], [47, 64, 6]], mids: [24] },
    { track: 2, from: 53.9, to: 56.1, name: 'voz P', wave: [[6, 21, 14]], mids: [24] },
    { track: 1, from: 56.4, to: 60.5, name: 'voz Princip', wave: [[0, 20, 8], [21, 42, 9]], mids: [24] },
    { track: 2, from: 59.7, to: 64.1, name: 'voz Principa', wave: [[9, 28, 9], [30, 45, 8]], mids: [24] },
    { track: 3, from: 65.9, to: 73.9, name: 'voz Principal(25)', wave: [[1, 9, 5], [9, 22, 5], [27, 43, 3], [43, 48, 1], [49, 63, 3], [67, 80, 3]], mids: [24] },
    { track: 5, from: 8, to: 11.4, name: 'voz Princ', fx: 'event', wave: [[2, 32, 1, 1]], mids: [24], specks: 2 },
    { track: 5, from: 12, to: 14.7, name: 'voz Pri', fx: 'event', wave: [[1, 27, 2, 1]], mids: [24], specks: 2 },
    { track: 6, from: 14.7, to: 15.9, name: 'vo', fx: 'event', wave: [[0, 12, 3, 1]], mids: [24], specks: 2 },
    { track: 7, from: 8, to: 34.4, name: 'Bender bajo', fx: 'timebase', wave: bassWave, mids: [13], dip: 1 },
    { track: 7, from: 47.2, to: 59, name: 'Bender bajo(4)', wave: [[7, 12, 9], [26, 34, 7], [47, 53, 6], [66, 80, 10], [87, 95, 8], [107, 114, 8]], mids: [13], dip: 1 },
    { track: 7, from: 58.8, to: 62.9, name: 'Bender ba', joined: 1, wave: [[5, 11, 10], [19, 26, 8], [32, 38, 5]], mids: [13], dip: 1 },
    { track: 7, from: 63.6, to: 67, name: 'Bender b', wave: [[6, 12, 9], [24, 30, 10]], mids: [13], dip: 1 }
];

const waveColors = { mint: '#22ab6e', yellow: '#899f1a', orange: '#9c4216', 'blue-c': '#264e8a', lime: '#62a61c' };

const files = [
    ['depth0', 'music', 'Música', 'open'],
    ['depth1', 'folder', 'Afro soul', 'right'],
    ['depth1', 'folder', 'Celemony', 'right'],
    ['depth1', 'folder', 'Demos y  ideas', 'right'],
    ['depth1', 'folder', 'DIME MA - OcZELL  FT RAYMI', 'right'],
    ['depth1', 'folderopen', 'Instrumentales de interes', 'open'],
    ['leaf2', 'audio', '(FREE) Afro Rnb x Brazilian Funk Type Beat 2025 - C.'],
    ['leaf2', 'audio', '(FREE) Afro_RnB x Central Cee x Brazilian Funk Type'],
    ['leaf2', 'audio', '(FREE) Central Cee x Brazilian Funk Type Beat 2025 -'],
    ['leaf2', 'audio', '(FREE) House x Club Type Beat - Control Of Me  Afro'],
    ['leaf2', 'audio', '(FREE) Mora x Izaak - DOS EXTRAÑOS  Funk_R&amp;B T'],
    ['leaf2', 'audio', '(FREE) Morad x Beny Jr x Brazilian Funk Type Beat -'],
    ['leaf2', 'audio', '(SOLD) Rema x Omah Lay x Afrobeat type beat - Pray'],
    ['leaf2', 'audio', '[FREE] Deep House x Brazilian Funk Type Beat - La N'],
    ['leaf2', 'audio', '[FREE] Deep House x Brazilian Funk Type Beat - TRA'],
    ['leaf2', 'audio', '[FREE] House x Amapiano Type Beat - BLISS  Afro D'],
    ['leaf2', 'audio', '[FREE] House x Amapiano Type Beat - PRICE  R&amp;B D'],
    ['leaf2', 'audio', '[FREE] House x Club Type Beat - Bad Intentions  Mel'],
    ['leaf2', 'audio', '[FREE] House x Club Type Beat - Can\'t Let You Go  M'],
    ['leaf2', 'audio', '[FREE] House x Club Type Beat - Holding You  Sad D'],
    ['leaf2', 'audio', '[FREE] Tyla x Amapiano Type Beat 2025 - Away From'],
    ['leaf2 selected', 'audio', 'BAD BUNNY X MORA TYPE BEAT - IBIZA   AFROBE'],
    ['depth1', 'folder', 'Raymi', 'right'],
    ['leaf1', 'zip', 'herinel  para.zip'],
    ['leaf1', 'audio', 'Top Flow - Funk It.mp3'],
    ['leaf1', 'audio', 'Top Flow - Funk It.wav'],
    ['depth0', 'set', 'Studio One', 'right'],
    ['depth0', 'set', 'Sets de sonido', 'right'],
    ['depth0', 'disk', 'Volúmenes', 'right']
];

let seed = 7;
function random() {
    seed = (seed * 16807) % 2147483647;
    return seed / 2147483647;
}

function icon(name, cls) {
    return `<svg class="${cls || ''}"><use href="#${name}"/></svg>`;
}

function wavePath(parts, mid, dip) {
    let d = '';
    parts.forEach(([from, to, amp, flat]) => {
        const top = [];
        const bottom = [];
        for (let x = from; x <= to; x++) {
            const t = (x - from) / (to - from);
            const env = flat ? 1 : Math.pow(Math.sin(Math.PI * Math.min(1, t * 0.9 + 0.08)), dip ? 1.2 : 0.7);
            const a = Math.max(0.4, amp * env * (0.7 + random() * 0.35) * (dip ? 0.6 : 1));
            const b = Math.max(0.4, amp * env * (0.7 + random() * 0.35));
            top.push(`${x} ${(mid - a).toFixed(1)}`);
            bottom.unshift(`${x} ${(mid + b).toFixed(1)}`);
        }
        d += `M${top.join('L')}L${bottom.join('L')}z`;
    });
    return d;
}

document.getElementById('tracks').innerHTML = tracks.map((t, i) => `
    <div class="track">
        <div class="track-color ${t.color}">${icon('wave')}</div>
        <div class="track-number">${i + 1}</div>
        <div class="track-body">
            <div class="track-top">
                <div class="track-buttons"><button>M</button><button>S</button><button aria-label="Grabar"><span class="rec-dot"></span></button><button aria-label="Monitor">${icon('half')}</button></div>
                <span class="track-name">${t.name}</span>${icon('wave')}
            </div>
            <input class="fader" type="range" value="${t.level}" aria-label="Volumen ${i + 1}" style="--level: ${t.level}%">
            <div class="slot"><select aria-label="Entrada ${i + 1}"><option>${t.input}</option></select><small>${t.mode}</small>${icon('stereo', 'io')}${icon('down', 'caret')}</div>
            <div class="slot">${icon('cube', 'box')}<select class="grow" aria-label="Instrumento ${i + 1}"><option>Ninguno</option></select>${icon('down', 'caret')}</div>
        </div>
        <div class="meters"><div style="height: ${t.meter}px"></div><div style="height: ${t.meter}px"></div></div>
    </div>`).join('');

let marks = '';
for (let bar = 1; bar <= BARS; bar += 4) {
    marks += `<span>${bar}</span>`;
}
document.getElementById('ruler').innerHTML = marks;

function clipHtml(c) {
    const color = tracks[c.track].color;
    const width = (c.to - c.from) * PX;
    let specks = '';
    if (c.specks) {
        for (let i = 0; i < width / 2; i++) {
            const y = c.specks === 2 ? 13 + random() * 14 : 12 + random() * 6;
            specks += `<rect x="${(2 + random() * (width - 5)).toFixed(1)}" y="${y.toFixed(1)}" width="2" height="1" fill="${c.specks === 2 ? '#a9c8ee' : '#899f1a'}"/>`;
        }
    }
    const path = c.mids.map(mid => wavePath(c.wave, mid, c.dip)).join('');
    const lines = c.mids.map(mid => `<path d="M0 ${mid}H${width}" stroke="${waveColors[color]}" stroke-width="1" opacity="0.4"/>`).join('');
    return `<div class="clip ${color}${c.joined ? ' joined' : ''}" style="left: ${c.from / BARS * 100}%; width: ${(c.to - c.from) / BARS * 100}%">
        <svg viewBox="0 0 ${width} 49" preserveAspectRatio="none">${lines}<path d="${path}" fill="${waveColors[color]}"/>${specks}</svg>
        <span class="clip-name">${c.name}</span>${c.fx ? icon(c.fx, 'clip-fx') : ''}</div>`;
}

document.getElementById('lanes').innerHTML = tracks.map((t, i) =>
    `<div class="lane">${clips.filter(c => c.track === i).map(clipHtml).join('')}</div>`).join('');

document.getElementById('tree').innerHTML = files.map(([cls, ico, name, twist]) =>
    `<li class="${cls}">${twist ? icon(twist, 'twist') : ''}${icon(ico, 'icon')}<span>${name}</span></li>`).join('');

const previewParts = [[0, 24, 9, 1], [23, 70, 16, 1], [71, 94, 16, 1], [95, 200, 16, 1], [201, 213, 16, 1], [213, 236, 9, 1], [236, 239, 1, 1]];
document.getElementById('preview').innerHTML = `<path d="${wavePath(previewParts, 14)}" fill="#74b5d2"/>`;
```
